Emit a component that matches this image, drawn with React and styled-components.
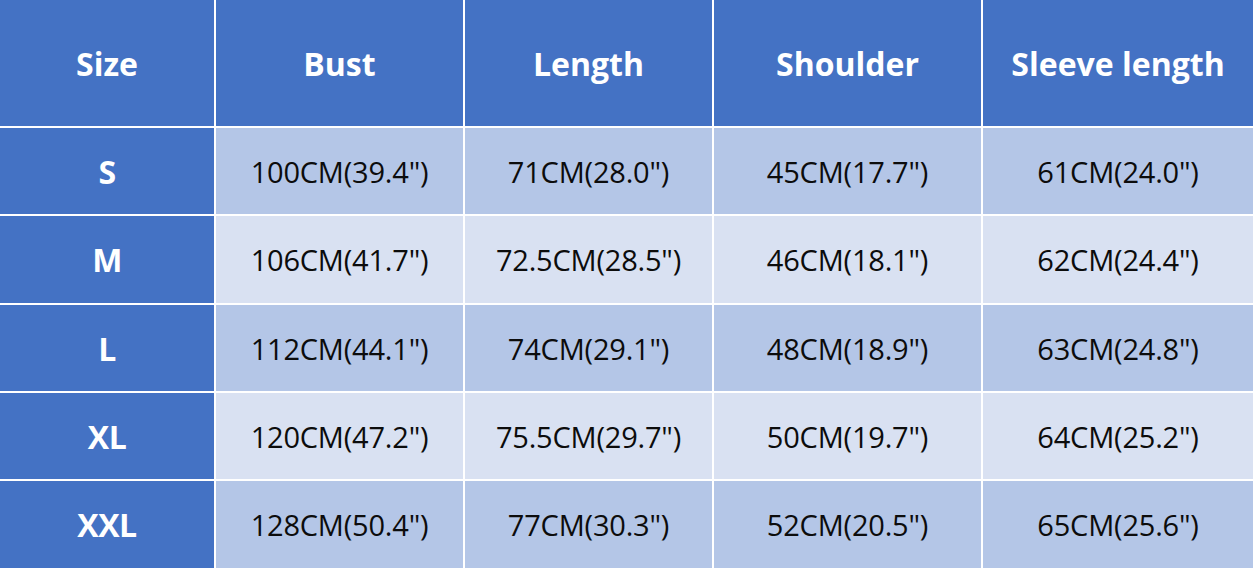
import styled, { createGlobalStyle } from "styled-components";

const GlobalStyle = createGlobalStyle`
  html, body {
    margin: 0;
    padding: 0;
    background: #ffffff;
  }
`;

const headers = ["Size", "Bust", "Length", "Shoulder", "Sleeve length"];

const rows = [
    ["S", "100CM(39.4\")", "71CM(28.0\")", "45CM(17.7\")", "61CM(24.0\")"],
    ["M", "106CM(41.7\")", "72.5CM(28.5\")", "46CM(18.1\")", "62CM(24.4\")"],
    ["L", "112CM(44.1\")", "74CM(29.1\")", "48CM(18.9\")", "63CM(24.8\")"],
    ["XL", "120CM(47.2\")", "75.5CM(29.7\")", "50CM(19.7\")", "64CM(25.2\")"],
    ["XXL", "128CM(50.4\")", "77CM(30.3\")", "52CM(20.5\")", "65CM(25.6\")"],
];

export default function App() {
    return (
        <>
            <GlobalStyle />
            <Table>
                {headers.map((h) => (
                    <HeadCell key={h}>{h}</HeadCell>
                ))}
                {rows.map((row, i) =>
                    row.map((val, j) =>
                        j === 0 ? (
                            <SizeCell key={i + "-" + j}>{val}</SizeCell>
                        ) : (
                            <DataCell key={i + "-" + j} $alt={i % 2 === 1}>
                                {val}
                            </DataCell>
                        )
                    )
                )}
            </Table>
        </>
    );
}

const Table = styled.div`
  display: grid;
  grid-template-columns: 214px 247px 247px 267px 270px;
  grid-template-rows: 126px 86px 87px 86px 86px 87px;
  gap: 2px;
  width: 1253px;
  height: 568px;
  background: #ffffff;
  box-sizing: border-box;
`;

const Cell = styled.div`
  display: flex;
  align-items: center;
  justify-content: center;
  font-family: "Open Sans", "Noto Sans", sans-serif;
`;

const HeadCell = styled(Cell)`
  background: #4472c4;
  color: #ffffff;
  font-weight: 700;
  font-size: 32px;
`;

const SizeCell = styled(Cell)`
  background: #4472c4;
  color: #ffffff;
  font-weight: 700;
  font-size: 32px;
  letter-spacing: -0.5px;
`;

const DataCell = styled(Cell)`
  background: ${(p) => (p.$alt ? "#d9e1f2" : "#b4c6e7")};
  color: #0c0c0c;
  font-size: 29px;
  letter-spacing: -0.2px;
`;
